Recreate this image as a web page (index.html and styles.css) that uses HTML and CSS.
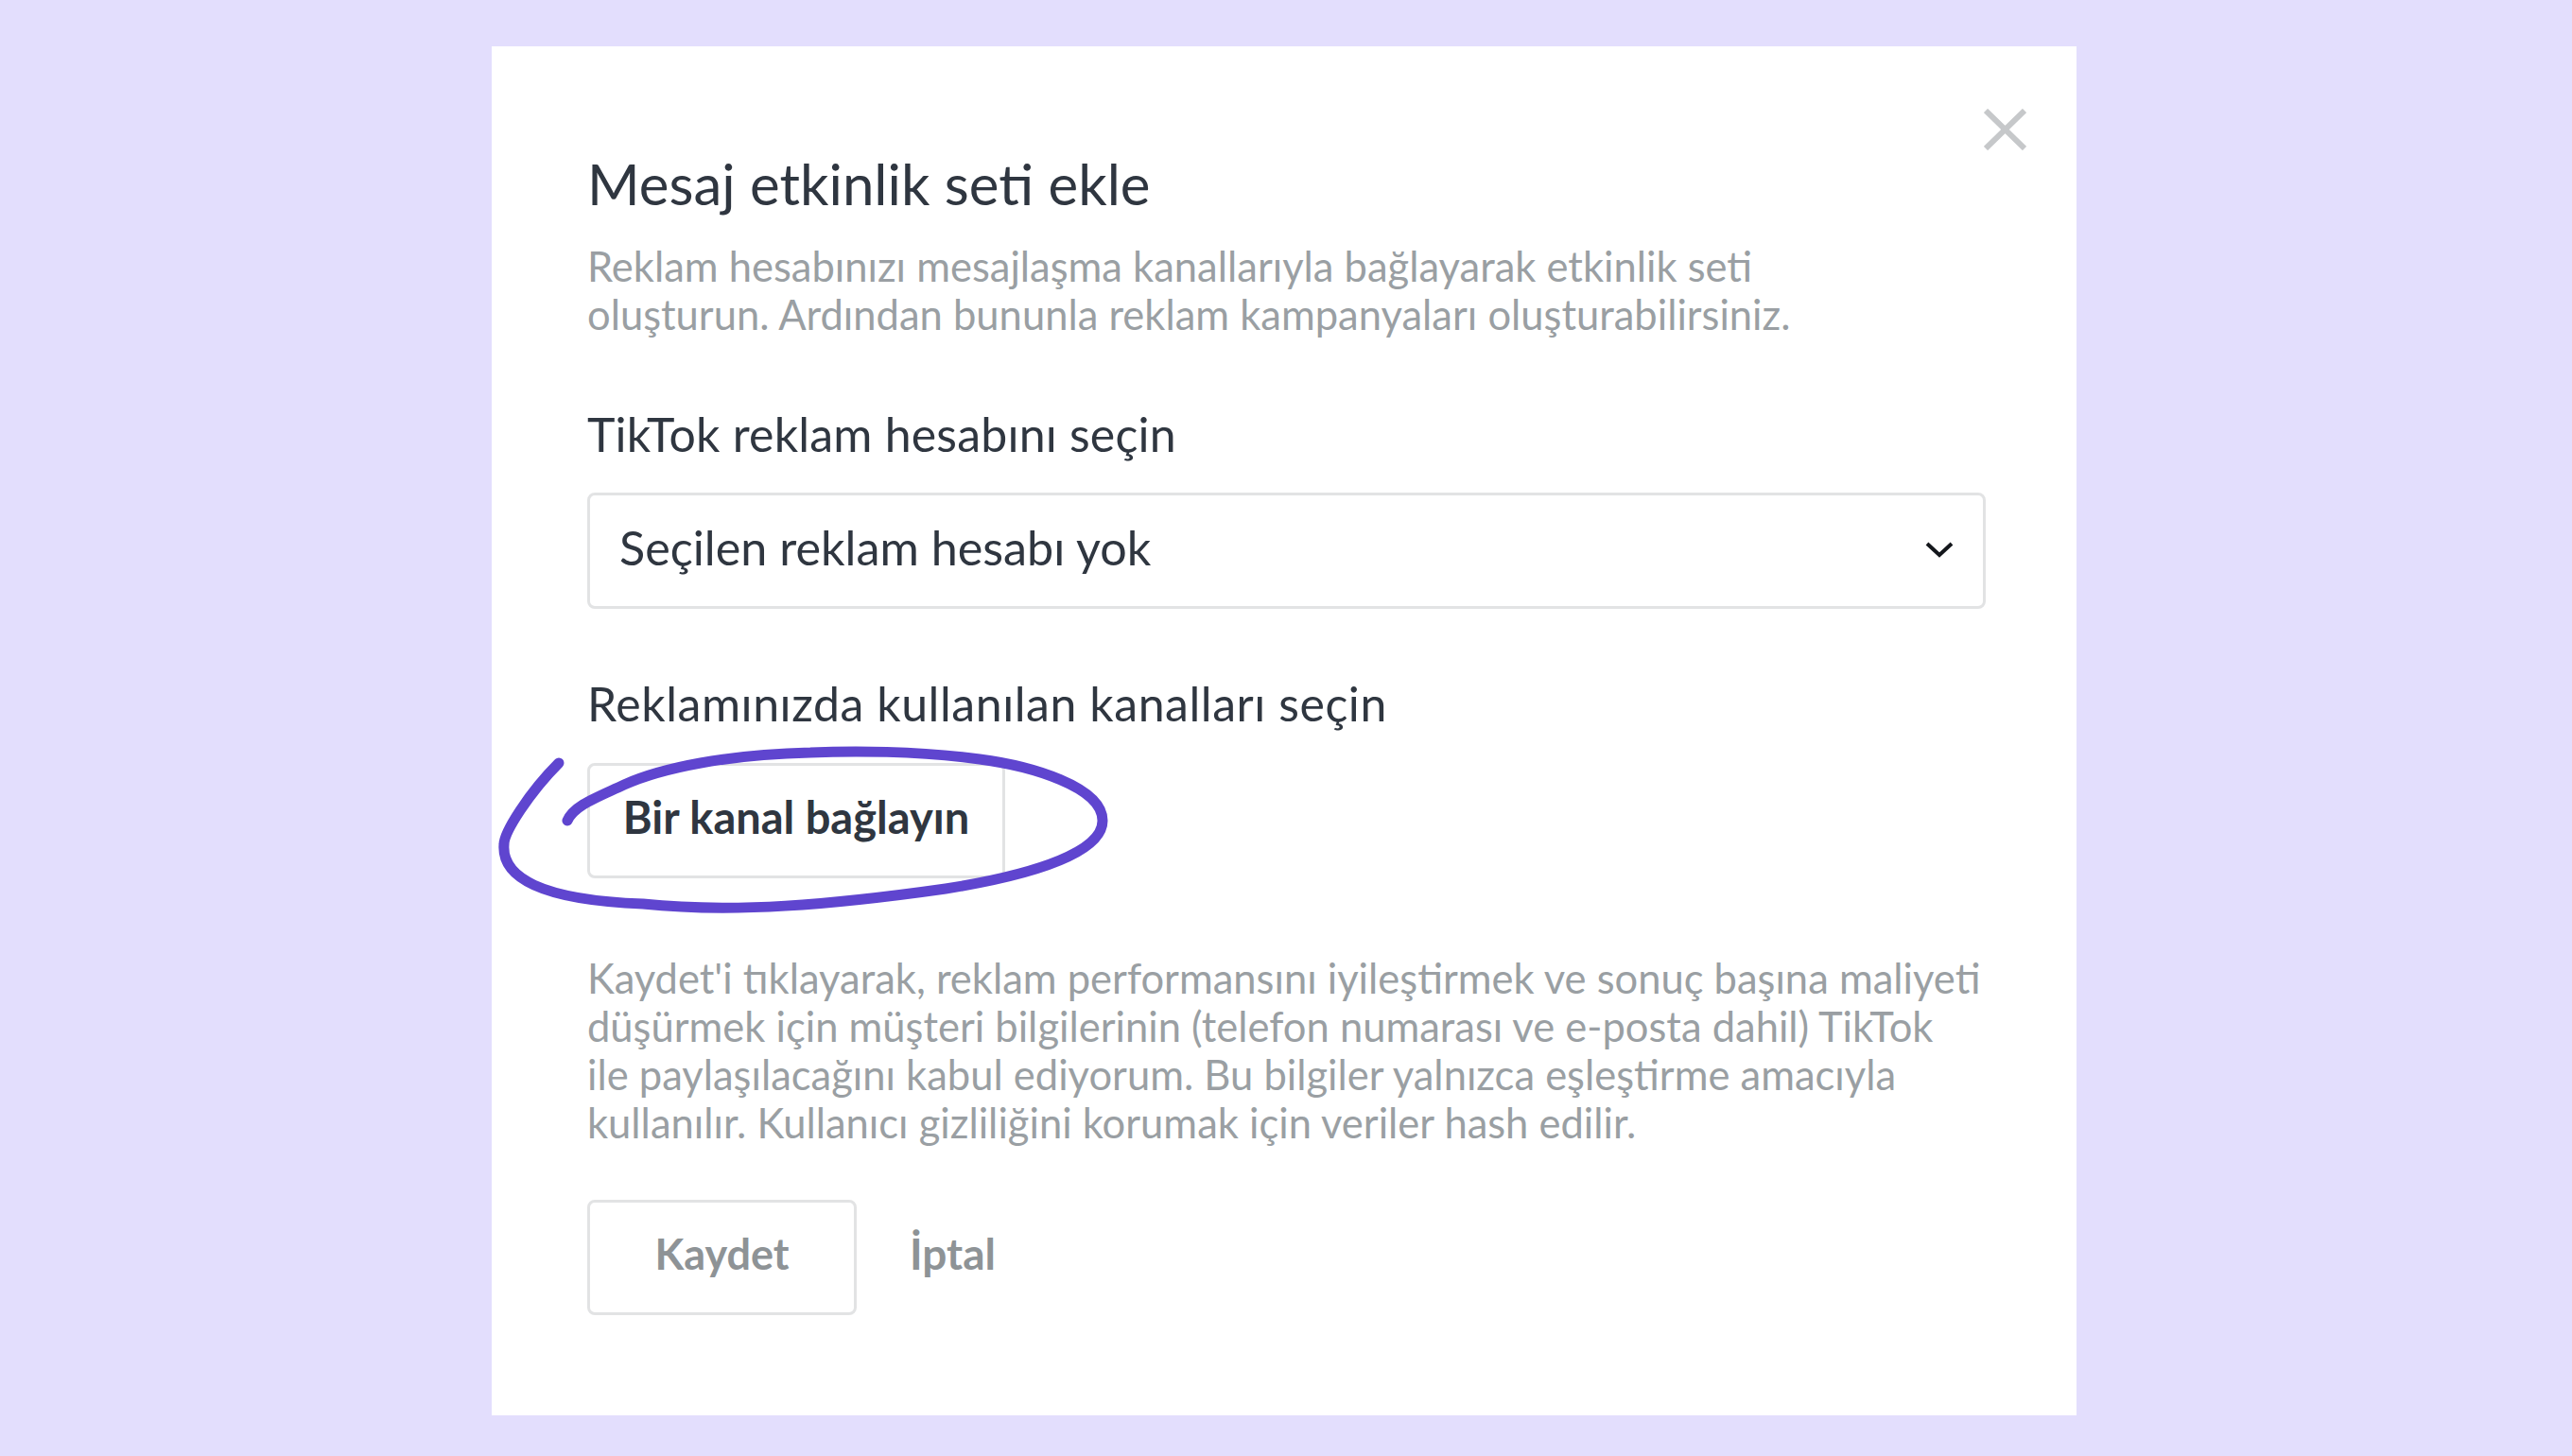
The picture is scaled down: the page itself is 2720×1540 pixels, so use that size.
FILE: index.html
```html
<!DOCTYPE html>
<html lang="tr">
<head>
    <meta charset="UTF-8">
    <title>Mesaj etkinlik seti ekle</title>
    <link rel="stylesheet" href="styles.css">
</head>
<body>
    <div class="modal">
        <svg class="close" viewBox="0 0 45 44" aria-hidden="true">
            <path d="M2 2 L43 42 M43 2 L2 42" />
        </svg>

        <h1>Mesaj etkinlik seti ekle</h1>
        <p class="muted intro">Reklam hesabınızı mesajlaşma kanallarıyla bağlayarak etkinlik seti<br>oluşturun. Ardından bununla reklam kampanyaları oluşturabilirsiniz.</p>

        <div class="label first-label">TikTok reklam hesabını seçin</div>
        <div class="select">
            <span>Seçilen reklam hesabı yok</span>
            <svg class="chevron" viewBox="0 0 30 18" aria-hidden="true">
                <path d="M2 3 L15 15 L28 3" />
            </svg>
        </div>

        <div class="label second-label">Reklamınızda kullanılan kanalları seçin</div>
        <button class="btn connect">Bir kanal bağlayın</button>

        <p class="muted terms">Kaydet'i tıklayarak, reklam performansını iyileştirmek ve sonuç başına maliyeti<br>düşürmek için müşteri bilgilerinin (telefon numarası ve e-posta dahil) TikTok<br>ile paylaşılacağını kabul ediyorum. Bu bilgiler yalnızca eşleştirme amacıyla<br>kullanılır. Kullanıcı gizliliğini korumak için veriler hash edilir.</p>

        <div class="actions">
            <button class="btn save">Kaydet</button>
            <button class="cancel">İptal</button>
        </div>
    </div>

    <!-- elle cizilmis daire -->
    <svg class="scribble" viewBox="0 0 2720 1540" aria-hidden="true">
        <path d="M591 807 C560 838 533 880 533 893 C530 928 572 952 680 956 C775 966 880 957 1000 940 C1100 924 1166 900 1166 868 C1166 832 1090 810 1036 803 C970 794 900 794 857 796 C770 798 700 812 660 830 C630 844 607 852 600 868" />
    </svg>
</body>
</html>
```
FILE: styles.css
```css
* {
    box-sizing: border-box;
}

body {
    margin: 0;
    height: 1540px;
    background-color: #e3defd;
    font-family: 'Lato', sans-serif;
    color: #2f3640;
    position: relative;
    overflow: hidden;
}

.modal {
    position: relative;
    width: 1676px;
    height: 1448px;
    margin: 49px 0 0 520px;
    padding: 110px 96px 0 101px;
    background-color: #ffffff;
}

.close {
    position: absolute;
    top: 66px;
    right: 53px;
    width: 45px;
    height: 44px;
}

.close path {
    fill: none;
    stroke: #c6c8ca;
    stroke-width: 6;
}

h1 {
    margin: 0;
    font-size: 60px;
    font-weight: 400;
    line-height: 70px;
}

.muted {
    margin: 0;
    color: #9a9fa3;
    font-size: 43.5px;
    line-height: 51px;
    white-space: nowrap;
}

.intro {
    margin-top: 27px;
}

.label {
    font-size: 50px;
    line-height: 60px;
}

.first-label {
    margin-top: 71px;
    letter-spacing: 0.2px;
}

.second-label {
    margin-top: 70px;
    letter-spacing: 0.55px;
}

.select {
    display: flex;
    justify-content: space-between;
    align-items: center;
    height: 123px;
    margin-top: 32px;
    padding: 0 31px 8px;
    border: 3px solid #e2e3e4;
    border-radius: 8px;
    font-size: 50.3px;
}

.chevron {
    width: 30px;
    height: 18px;
    margin-top: 4px;
}

.chevron path {
    fill: none;
    stroke: #14171c;
    stroke-width: 4;
}

.btn {
    height: 122px;
    padding-bottom: 9px;
    background: #ffffff;
    border: 3px solid #e2e3e4;
    border-radius: 8px;
    font-family: inherit;
    font-weight: 700;
    font-size: 47px;
}

.connect {
    display: block;
    width: 442px;
    margin-top: 33px;
    color: #2f3640;
}

.terms {
    margin-top: 80px;
}

.actions {
    display: flex;
    align-items: center;
    gap: 56px;
    margin-top: 56px;
}

.save {
    width: 285px;
    font-size: 45px;
    color: #8e9396;
}

.cancel {
    padding: 0 0 9px;
    border: 0;
    background: none;
    font-family: inherit;
    font-weight: 700;
    font-size: 46px;
    color: #8e9396;
}

.scribble {
    position: absolute;
    top: 0;
    left: 0;
    width: 2720px;
    height: 1540px;
    pointer-events: none;
}

.scribble path {
    fill: none;
    stroke: #5f45cf;
    stroke-width: 11;
    stroke-linecap: round;
}
```
